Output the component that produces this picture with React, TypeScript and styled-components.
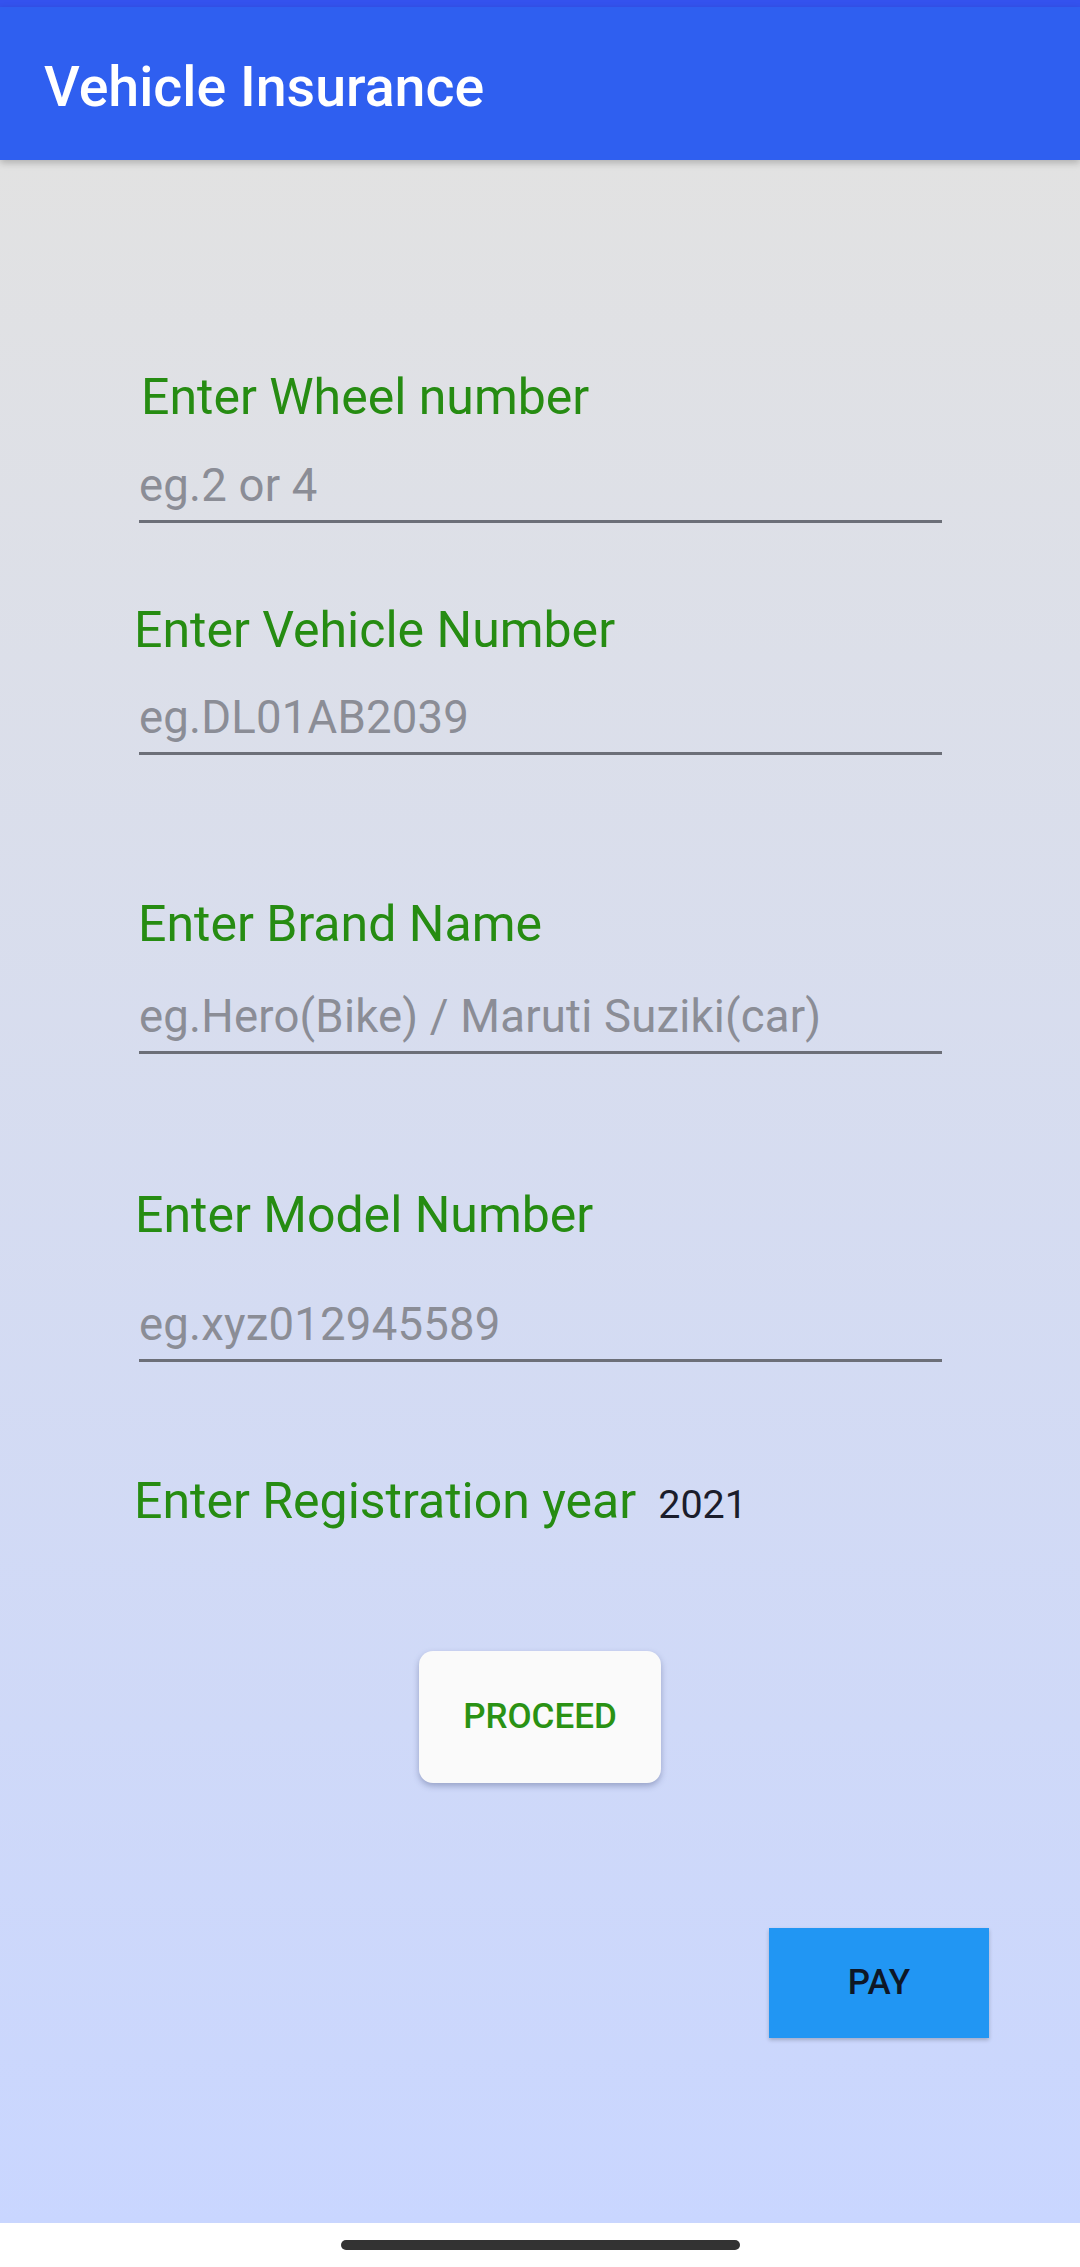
import React from "react";
import styled, { createGlobalStyle } from "styled-components";

const GlobalStyle = createGlobalStyle`
  html, body {
    margin: 0;
    padding: 0;
  }
  body {
    font-family: Roboto, "Noto Sans", "Liberation Sans", sans-serif;
    background: #ffffff;
  }
  #root {
    width: 1080px;
    min-height: 2267px;
  }
`;

const GREEN = "#268c12";

const Screen = styled.div`
  display: flex;
  flex-direction: column;
  width: 1080px;
  height: 2267px;
`;

const StatusStrip = styled.div`
  height: 7px;
  background: #3452ee;
`;

const AppBar = styled.header`
  position: relative;
  z-index: 1;
  box-sizing: border-box;
  height: 153px;
  padding: 53px 0 0 44px;
  background: #2f5ff0;
  box-shadow: 0 3px 7px rgba(0, 0, 0, 0.22);
`;

const Title = styled.h1`
  margin: 0;
  font-family: Roboto, "Noto Sans", sans-serif;
  font-weight: 500;
  font-size: 55.5px;
  line-height: 1;
  color: #ffffff;
`;

const Content = styled.main`
  flex: 1;
  display: flex;
  flex-direction: column;
  background: linear-gradient(180deg, #e2e2e2 0%, #c9d6ff 100%);
`;

const Field = styled.div<{ $top: number }>`
  margin-top: ${(p) => p.$top}px;
`;

const Label = styled.div<{ $indent: number }>`
  margin-left: ${(p) => p.$indent}px;
  font-family: Roboto, "Noto Sans", sans-serif;
  font-weight: 400;
  font-size: 50px;
  line-height: 1;
  color: ${GREEN};
`;

const EditText = styled.div<{ $gap: number }>`
  width: 803px;
  margin: ${(p) => p.$gap}px 0 0 139px;
  padding-bottom: 12px;
  border-bottom: 3px solid #6c6f78;
  font-family: Roboto, "Noto Sans", sans-serif;
  font-size: 45.5px;
  letter-spacing: 0.2px;
  line-height: 1;
  color: #8b8d96;
`;

const YearRow = styled.div`
  display: flex;
  align-items: baseline;
  gap: 22px;
  margin: 113.8px 0 0 134px;
`;

const YearValue = styled.span`
  font-family: Roboto, "Noto Sans", sans-serif;
  font-size: 39.5px;
  line-height: 1;
  color: #1b1d2b;
`;

const ProceedButton = styled.button`
  align-self: center;
  width: 242px;
  height: 132px;
  margin-top: 125px;
  border: none;
  border-radius: 14px;
  background: #fafafa;
  box-shadow: 0 3px 6px rgba(50, 60, 110, 0.35);
  font-family: Roboto, "Noto Sans", sans-serif;
  font-weight: 500;
  font-size: 35px;
  color: #2a9214;
  padding: 0;
`;

const PayButton = styled.button`
  align-self: flex-end;
  width: 220px;
  height: 110px;
  margin: 145px 91px 0 0;
  border: none;
  border-radius: 0;
  background: #2196f3;
  box-shadow: 0 2px 4px rgba(0, 0, 0, 0.22);
  font-family: Roboto, "Noto Sans", sans-serif;
  font-weight: 500;
  font-size: 35px;
  color: #0e1726;
  padding: 0;
`;

const NavBar = styled.div`
  display: flex;
  justify-content: center;
  box-sizing: border-box;
  height: 44px;
  padding-top: 17px;
  background: #ffffff;
`;

const HomeHandle = styled.div`
  width: 399px;
  height: 10px;
  border-radius: 5px;
  background: #333333;
`;

type FieldSpec = {
  top: number;
  indent: number;
  gap: number;
  label: string;
  hint: string;
};

const fields: FieldSpec[] = [
  { top: 212, indent: 141, gap: 40.7, label: "Enter Wheel number", hint: "eg.2 or 4" },
  { top: 81.8, indent: 134, gap: 39.7, label: "Enter Vehicle Number", hint: "eg.DL01AB2039" },
  { top: 143.8, indent: 138, gap: 44.7, label: "Enter Brand Name", hint: "eg.Hero(Bike) / Maruti Suziki(car)" },
  { top: 135.8, indent: 135, gap: 61.7, label: "Enter Model Number", hint: "eg.xyz012945589" },
];

export default function App() {
  return (
    <>
      <GlobalStyle />
      <Screen>
        <StatusStrip />
        <AppBar>
          <Title>Vehicle Insurance</Title>
        </AppBar>
        <Content>
          {fields.map((f) => (
            <Field key={f.label} $top={f.top}>
              <Label $indent={f.indent}>{f.label}</Label>
              <EditText $gap={f.gap}>{f.hint}</EditText>
            </Field>
          ))}
          <YearRow>
            <Label $indent={0}>Enter Registration year</Label>
            <YearValue>2021</YearValue>
          </YearRow>
          <ProceedButton>PROCEED</ProceedButton>
          <PayButton>PAY</PayButton>
        </Content>
        <NavBar>
          <HomeHandle />
        </NavBar>
      </Screen>
    </>
  );
}
